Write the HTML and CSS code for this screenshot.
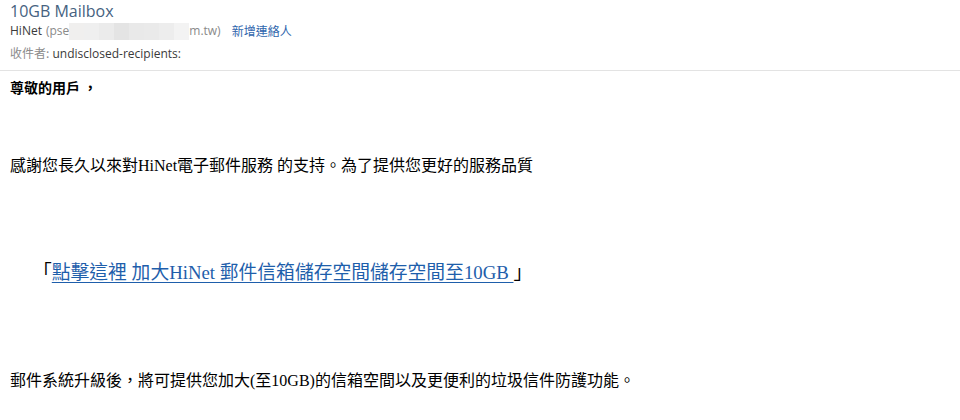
FILE: index.html
```html
<!DOCTYPE html>
<html lang="zh-Hant">
<head>
<meta charset="utf-8">
<title>10GB Mailbox</title>
<link rel="stylesheet" href="styles.css">
</head>
<body>
<header class="mail-head">
  <h1 class="subject">10GB Mailbox</h1>
  <div class="from">
    <span class="sender">HiNet</span>
    <span class="addr">(pse<span class="blur"><i class="b1"></i><i class="b2"></i><i class="b3"></i><i class="b4"></i><i class="b5"></i><i class="b6"></i><i class="b7"></i><i class="b8"></i></span>m.tw)</span>
    <a class="add-contact" href="#">新增連絡人</a>
  </div>
  <div class="to"><span class="label">收件者:</span> <span class="rcpt">undisclosed-recipients:</span></div>
</header>
<main class="mail-body">
  <p class="greet">尊敬的用戶 ，</p>
  <p class="line l2">感謝您長久以來對HiNet電子郵件服務 的支持。為了提供您更好的服務品質</p>
  <p class="link-line">「<a href="#">點擊這裡 加大HiNet 郵件信箱儲存空間儲存空間至10GB </a>」</p>
  <p class="line l4">郵件系統升級後，將可提供您加大(至10GB)的信箱空間以及更便利的垃圾信件防護功能。</p>
</main>
</body>
</html>
```
FILE: styles.css
```css
html, body {
  margin: 0;
  padding: 0;
  background: #ffffff;
}
body {
  width: 960px;
  height: 420px;
  overflow: hidden;
}
.mail-head {
  padding: 1px 10px 8px;
  border-bottom: 1px solid #e3e3e3;
  font-family: "Open Sans", "Noto Sans CJK TC", sans-serif;
}
.subject {
  margin: 0;
  font-size: 16px;
  font-weight: 400;
  line-height: 20px;
  color: #46627f;
}
.from {
  display: flex;
  align-items: center;
  font-size: 12px;
  line-height: 16px;
  margin-top: 1px;
}
.sender {
  color: #3a3a3a;
  margin-right: 4px;
}
.addr {
  color: #8a8a8a;
  display: inline-flex;
  align-items: center;
}
.blur {
  display: inline-flex;
  height: 17px;
  margin-top: 1px;
}
.blur i {
  display: block;
  width: 15px;
  height: 17px;
}
.b1 { background: #f0efee; }
.b2 { background: #efefef; }
.b3 { background: #ebebeb; }
.b4 { background: #e4e4e4; }
.b5 { background: #e9e9e9; }
.b6 { background: #eaeaea; }
.b7 { background: #ededed; }
.b8 { background: #f3f3f3; }
.add-contact {
  margin-left: 11px;
  color: #2f66ad;
  text-decoration: none;
  font-family: "Noto Sans CJK TC", sans-serif;
}
.to {
  margin-top: 5px;
  font-size: 12px;
  line-height: 16px;
}
.to .label {
  color: #8c8c8c;
  font-family: "Noto Sans CJK TC", sans-serif;
}
.to .rcpt {
  color: #3a3a3a;
}
.mail-body {
  padding: 6px 10px 0;
  font-family: "Liberation Serif", "Noto Sans CJK TC", serif;
  color: #000;
}
.mail-body p {
  margin: 0;
}
.greet {
  font-size: 14px;
  font-weight: 700;
  line-height: 20px;
  font-family: "Noto Sans CJK TC", sans-serif;
}
.line {
  font-size: 16px;
  line-height: 20px;
}
.l2 {
  margin-top: 59px !important;
}
.link-line {
  margin-top: 85px !important;
  padding-left: 23px;
  font-size: 18.8px;
  line-height: 24px;
}
.link-line a {
  color: #1e5eab;
  text-decoration: underline;
  text-underline-offset: 3px;
}
.l4 {
  margin-top: 86px !important;
}
```
